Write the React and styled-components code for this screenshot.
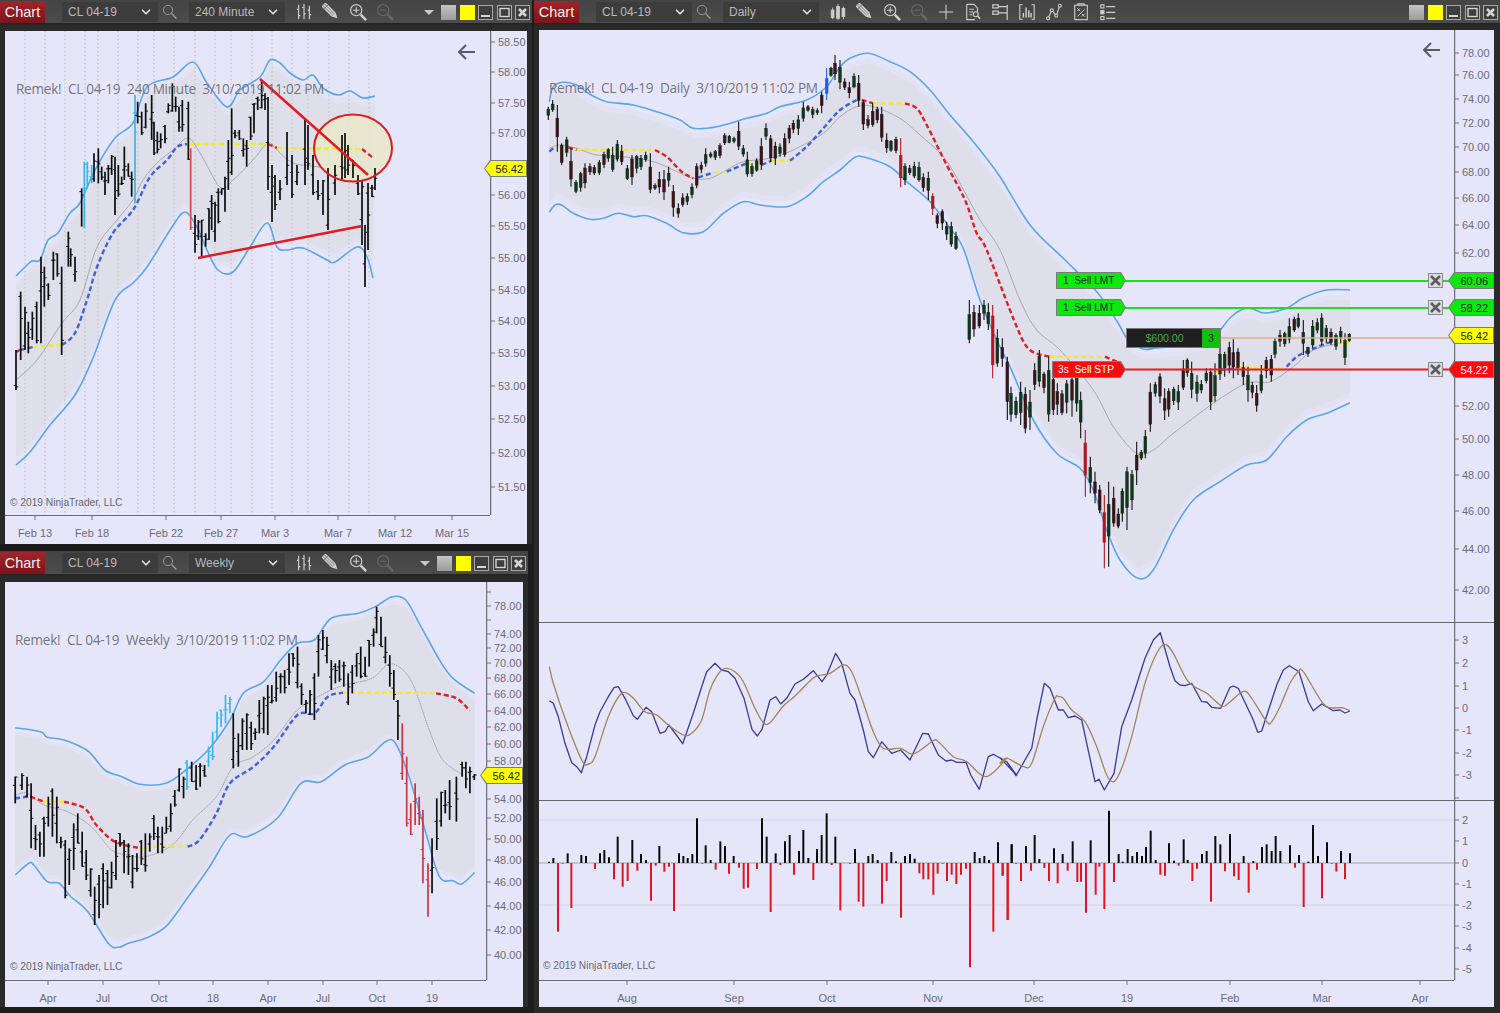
import React from "react";
import styled, { createGlobalStyle } from "styled-components";
import { ChevronDown } from "lucide-react";

const zoomed = (ox, oy, sx = 3) => (pts) => pts.map(([x, y]) => [ox + x / sx, oy + y / 3]);
const z7 = zoomed(540, 50);
const z8 = zoomed(960, 300);
const z9 = zoomed(540, 620);
const z10 = zoomed(1000, 620);
const z11 = zoomed(0, 550, 2.958);

const rng = (seed) => () => {
    seed = (seed * 9301 + 49297) % 233280;
    return seed / 233280;
};

const linePath = (pts) => "M" + pts.map((p) => p.map((n) => n.toFixed(1)).join(" ")).join("L");

const curvePath = (pts) => {
    let d = `M${pts[0][0].toFixed(1)} ${pts[0][1].toFixed(1)}`;
    for (let i = 0; i < pts.length - 1; i++) {
        const p0 = pts[i - 1] || pts[i];
        const p1 = pts[i];
        const p2 = pts[i + 1];
        const p3 = pts[i + 2] || p2;
        const c1 = [p1[0] + (p2[0] - p0[0]) / 6, p1[1] + (p2[1] - p0[1]) / 6];
        const c2 = [p2[0] - (p3[0] - p1[0]) / 6, p2[1] - (p3[1] - p1[1]) / 6];
        d += `C${c1[0].toFixed(1)} ${c1[1].toFixed(1)} ${c2[0].toFixed(1)} ${c2[1].toFixed(1)} ${p2[0].toFixed(1)} ${p2[1].toFixed(1)}`;
    }
    return d;
};

/* ---- 240 minute data ---- */
const m240Upper = [[16, 276], [25, 267], [32, 261], [40, 260], [48, 240], [58, 233], [70, 213], [80, 203], [95, 170], [115, 138], [133, 123], [147, 87], [173, 77], [193, 62], [207, 83], [227, 107], [240, 90], [260, 77], [270, 60], [280, 63], [290, 73], [303, 80], [313, 75], [323, 88], [338, 95], [350, 91], [363, 98], [375, 96]];
const m240Lower = [[16, 465], [30, 452], [50, 425], [75, 395], [93, 358], [115, 300], [133, 283], [147, 267], [172, 227], [185, 212], [197, 227], [207, 250], [218, 270], [233, 272], [250, 247], [267, 223], [277, 247], [287, 250], [303, 248], [327, 260], [335, 262], [357, 247], [367, 257], [373, 278]];
const m240Mid = [[16, 380], [37, 360], [62, 323], [80, 300], [97, 247], [117, 220], [133, 200], [143, 180], [157, 163], [173, 150], [188, 138], [200, 153], [220, 187], [233, 180], [253, 160], [268, 143], [277, 150], [293, 163], [320, 167]];
const m240Trend = [
    { c: "#e01f26", p: [[16, 352], [20, 350]] },
    { c: "#3f63d8", p: [[20, 350], [33, 347]] },
    { c: "#f2ec20", p: [[33, 347], [62, 345]] },
    { c: "#3f63d8", p: [[62, 345], [75, 333], [87, 300], [97, 267], [113, 233], [133, 210], [150, 177], [167, 160], [177, 147], [187, 144]] },
    { c: "#f2ec20", p: [[188, 144], [268, 144]] },
    { c: "#e01f26", p: [[268, 144], [277, 148]] },
    { c: "#f2ec20", p: [[277, 148], [360, 149]] },
    { c: "#e01f26", p: [[362, 149], [372, 157]] },
];
const m240Bars = [
    ...[[48, 870, 990], [62, 695, 900], [75, 740, 870], [85, 785, 880], [97, 755, 840], [110, 725, 850], [123, 590, 850], [133, 620, 740], [145, 670, 720], [160, 575, 660], [172, 580, 650], [185, 620, 885], [205, 515, 620], [212, 565, 620], [225, 590, 665], [245, 385, 500], [253, 305, 505, "#38b6e8"], [262, 305, 385, "#38b6e8"], [275, 315, 370, "#38b6e8"], [282, 280, 365], [295, 265, 370], [305, 320, 360], [315, 335, 405], [325, 315, 370], [335, 285, 345], [345, 290, 465], [355, 315, 410], [365, 350, 375], [373, 260, 360], [385, 310, 350], [395, 335, 410], [405, 105, 430, "#38b6e8"], [413, 125, 190], [425, 155, 225], [437, 130, 205], [455, 105, 240], [462, 185, 285], [472, 215, 280], [482, 220, 265], [495, 195, 250], [505, 130, 160], [517, 70, 155], [527, 110, 155], [537, 140, 215], [547, 120, 215], [565, 125, 300], [572, 265, 510, "#e0444a"], [585, 465, 578], [595, 480, 540], [605, 480, 590], [617, 520, 560], [627, 445, 540], [635, 405, 510], [645, 425, 545], [655, 385, 490], [665, 385, 405], [675, 350, 455], [685, 240, 390], [695, 145, 345], [705, 210, 235], [718, 210, 240], [730, 235, 290], [740, 240, 320], [752, 170, 240], [762, 130, 220], [773, 110, 150], [785, 60, 145], [795, 100, 150]]
        .map(([x, h, l, c]) => [x / 3, 60 + h / 3, 60 + l / 3, c]),
    [268, 97, 190], [272, 165, 222], [275, 175, 210], [280, 180, 200], [287, 132, 185], [292, 155, 198], [297, 165, 185], [305, 120, 185], [308, 125, 170], [313, 155, 195], [318, 180, 200], [323, 180, 215], [328, 168, 230], [335, 165, 195], [342, 135, 180], [345, 133, 178], [348, 145, 175], [353, 160, 178], [358, 175, 195], [362, 180, 245], [365, 225, 287], [368, 183, 250], [372, 185, 197], [375, 168, 190],
];
const m240Dots = [25, 45, 65, 85, 98, 118, 138, 154, 174, 195, 215, 231, 252, 272, 292, 308, 329, 349, 369];

/* ---- weekly data ---- */
const wkUpper = z11([[45, 533], [120, 545], [140, 562], [190, 570], [260, 603], [310, 660], [360, 680], [415, 703], [490, 700], [550, 660], [620, 595], [680, 510], [720, 430], [780, 395], [830, 330], [880, 280], [930, 270], [980, 205], [1060, 190], [1110, 170], [1160, 140], [1200, 150], [1240, 220], [1300, 330], [1340, 385], [1404, 430]]);
const wkLower = z11([[45, 975], [85, 940], [100, 945], [140, 995], [175, 1000], [210, 1040], [260, 1085], [320, 1180], [350, 1192], [380, 1180], [430, 1165], [490, 1130], [550, 1050], [620, 950], [680, 855], [730, 860], [820, 805], [890, 700], [950, 695], [1020, 645], [1090, 620], [1140, 575], [1170, 580], [1210, 680], [1260, 850], [1300, 980], [1340, 992], [1365, 1002], [1404, 968]]);
const wkMid = z11([[45, 735], [80, 730], [130, 765], [200, 785], [270, 830], [330, 900], [380, 915], [430, 920], [510, 885], [570, 810], [640, 740], [690, 650], [750, 620], [810, 570], [880, 480], [960, 430], [1020, 405], [1100, 385], [1145, 345], [1180, 350], [1220, 400], [1270, 540], [1310, 630], [1370, 675]]);
const wkTrend = [
    { c: "#3f63d8", p: z11([[45, 745], [85, 740]]) },
    { c: "#e01f26", p: z11([[90, 740], [130, 755]]) },
    { c: "#f2ec20", p: z11([[130, 755], [190, 755]]) },
    { c: "#e01f26", p: z11([[190, 755], [250, 775], [285, 825], [340, 875], [415, 895]]) },
    { c: "#f2ec20", p: z11([[415, 895], [445, 895]]) },
    { c: "#f2ec20", p: z11([[455, 890], [555, 890]]) },
    { c: "#3f63d8", p: z11([[555, 890], [590, 870], [640, 790], [680, 700], [750, 650], [810, 590], [880, 495], [930, 490], [970, 440], [1015, 428]]) },
    { c: "#f2ec20", p: z11([[1015, 428], [1290, 428]]) },
    { c: "#e01f26", p: z11([[1290, 430], [1350, 445], [1390, 482]]) },
];
const CYAN = "#38b6e8";
const RED = "#d0343a";
const wkBars = [[45, 680, 760], [65, 670, 720], [80, 680, 740], [92, 700, 895], [105, 825, 900], [118, 845, 920], [130, 800, 920], [143, 740, 830], [155, 715, 860], [168, 740, 880], [180, 860, 895], [193, 870, 1045], [205, 895, 1005], [218, 820, 960], [230, 790, 880], [243, 845, 950], [255, 900, 990], [268, 955, 1040], [280, 1010, 1125], [293, 975, 1105], [305, 940, 1075], [318, 960, 1065], [330, 935, 1015], [343, 870, 990], [355, 850, 890], [367, 870, 970], [380, 880, 975], [392, 915, 1015], [405, 910, 965], [418, 870, 945], [430, 850, 965], [443, 850, 905], [455, 795, 870], [467, 830, 910], [480, 830, 910], [492, 800, 850], [505, 760, 845], [517, 720, 770], [530, 655, 725], [543, 680, 745], [553, 630, 720, CYAN], [567, 635, 695], [580, 645, 720], [592, 640, 710], [605, 645, 680], [617, 590, 650, CYAN], [629, 545, 630, CYAN], [642, 485, 570, CYAN], [654, 480, 530, CYAN], [667, 435, 520, CYAN], [680, 440, 490, CYAN], [690, 490, 655], [705, 550, 650], [717, 505, 600], [730, 490, 600], [743, 515, 600], [755, 535, 570], [767, 450, 550], [780, 440, 550], [792, 405, 555], [804, 405, 460], [817, 365, 455], [830, 370, 430], [842, 360, 430], [855, 310, 405], [867, 310, 350], [880, 290, 415], [892, 400, 465], [905, 450, 490], [917, 420, 495], [930, 370, 510], [942, 255, 380], [955, 240, 300], [967, 260, 340], [980, 330, 420], [992, 340, 400], [1004, 330, 395], [1017, 335, 410], [1030, 370, 465], [1042, 345, 430], [1055, 310, 380], [1067, 290, 385], [1080, 320, 380], [1092, 270, 350], [1105, 235, 290], [1114, 170, 250], [1127, 200, 290], [1140, 260, 340], [1153, 315, 410], [1165, 360, 450], [1177, 450, 570], [1190, 520, 690, RED], [1203, 620, 830, RED], [1215, 760, 855, RED], [1228, 700, 825, RED], [1240, 740, 825, RED], [1251, 780, 1000, RED], [1266, 940, 1100, RED], [1278, 865, 1030], [1292, 745, 900], [1305, 725, 830], [1317, 720, 790], [1330, 690, 810], [1350, 680, 815], [1367, 635, 680], [1378, 635, 715], [1390, 650, 730], [1403, 672, 690]]
    .map(([x, h, l, c]) => [x / 2.958, 550 + h / 3, 550 + l / 3, c]);

/* ---- daily data ---- */
const dayUpper = [
    ...z7([[28, 155], [40, 110], [70, 97], [110, 105], [150, 133], [200, 155], [280, 165], [350, 185], [420, 210], [460, 235], [530, 230], [620, 205], [680, 190], [720, 170], [800, 150], [860, 110], [900, 50], [930, 25], [985, 10], [1050, 35], [1110, 65], [1170, 120], [1230, 195], [1300, 275], [1380, 380]]),
    [1030, 225], [1065, 260], [1097, 292], [1118, 323], [1128, 340], [1143, 349], [1157, 348], [1185, 345], [1213, 337], [1230, 318], [1243, 309], [1253, 309], [1265, 313], [1287, 308], [1303, 298], [1327, 290], [1350, 290],
];
const dayLower = [
    ...z7([[28, 487], [45, 465], [65, 465], [100, 490], [150, 508], [190, 505], [235, 490], [280, 500], [320, 497], [380, 520], [430, 548], [490, 545], [550, 490], [610, 455], [660, 465], [740, 470], [800, 440], [850, 395], [900, 360], [945, 322], [975, 322], [1050, 350], [1100, 395], [1170, 455], [1230, 535], [1270, 595]]),
    ...z8([[60, 0], [110, 120], [150, 200], [220, 360], [290, 460], [360, 505], [400, 570], [440, 690], [480, 780], [535, 835], [580, 810], [640, 690], [700, 600], [780, 545], [860, 495], [920, 480], [980, 410], [1040, 360], [1100, 340], [1170, 308]]),
];
const dayMid = [
    ...z7([[28, 295], [60, 285], [110, 295], [170, 315], [250, 320], [340, 335], [400, 360], [460, 385], [510, 385], [560, 360], [610, 335], [690, 325], [760, 300], [850, 250], [900, 200], [950, 170], [1000, 170], [1080, 205], [1140, 255], [1210, 320], [1260, 400], [1320, 510], [1380, 600]]),
    ...z8([[180, 0], [230, 90], [300, 150], [400, 270], [460, 380], [530, 460], [580, 450], [640, 400], [760, 310], [860, 250], [930, 245], [1000, 200], [1060, 150], [1140, 130]]),
];
const dayTrend = [
    { c: "#3f63d8", p: z7([[28, 305], [45, 290]]) },
    { c: "#f2ec20", p: z7([[55, 290], [85, 292]]) },
    { c: "#e01f26", p: z7([[85, 292], [110, 300]]) },
    { c: "#f2ec20", p: z7([[110, 300], [345, 300]]) },
    { c: "#e01f26", p: z7([[345, 300], [380, 320], [425, 365], [460, 385]]) },
    { c: "#3f63d8", p: z7([[475, 382], [520, 368]]) },
    { c: "#f2ec20", p: z7([[525, 368], [555, 368]]) },
    { c: "#3f63d8", p: z7([[560, 365], [620, 340]]) },
    { c: "#f2ec20", p: z7([[620, 340], [665, 345]]) },
    { c: "#3f63d8", p: z7([[665, 345], [695, 332]]) },
    { c: "#f2ec20", p: z7([[695, 332], [750, 332]]) },
    { c: "#3f63d8", p: z7([[750, 332], [800, 290], [850, 235], [900, 180], [950, 150]]) },
    { c: "#e01f26", p: z7([[965, 150], [1000, 160]]) },
    { c: "#f2ec20", p: z7([[1000, 160], [1095, 160]]) },
    { c: "#e01f26", p: [...z7([[1095, 160], [1130, 175], [1160, 225], [1220, 345], [1275, 450], [1310, 550], [1340, 600]]), ...z8([[170, 80], [210, 150], [270, 170]])] },
    { c: "#f2ec20", p: z8([[270, 170], [435, 170]]) },
    { c: "#e01f26", p: z8([[435, 170], [470, 185]]) },
    { c: "#f2ec20", p: z8([[765, 218], [780, 212]]) },
    { c: "#3f63d8", p: z8([[780, 210], [830, 205]]) },
    { c: "#f2ec20", p: z8([[835, 202], [970, 205]]) },
    { c: "#3f63d8", p: z8([[980, 200], [1010, 170], [1040, 155], [1100, 130], [1130, 125]]) },
    { c: "#f2ec20", p: z8([[1135, 128], [1170, 130]]) },
];
const BLUE_C = "#1a5fe0";
const RED_C = "#b01a20";
const dayCandles = [
    ...[[25, 170, 210], [38, 150, 185], [52, 165, 305], [65, 280, 345], [80, 260, 320], [93, 295, 410], [108, 390, 430], [122, 365, 425], [135, 340, 415], [150, 340, 375], [163, 345, 375], [178, 330, 375], [192, 305, 355], [205, 295, 335], [218, 290, 365], [232, 270, 335], [245, 285, 345], [262, 345, 390], [276, 315, 405], [290, 315, 370], [303, 315, 360], [317, 305, 335], [331, 310, 430], [345, 400, 420], [358, 365, 430], [372, 360, 450], [386, 350, 410], [400, 405, 500], [415, 460, 503], [428, 430, 470], [442, 430, 465], [456, 400, 445], [470, 340, 415], [484, 335, 370], [497, 295, 350], [512, 305, 325], [526, 300, 330], [540, 280, 325], [554, 250, 285], [568, 255, 280], [582, 260, 280], [596, 215, 300], [610, 285, 320], [622, 305, 380], [636, 340, 380], [650, 325, 365], [664, 265, 360], [678, 220, 270], [692, 255, 335], [706, 275, 345], [720, 280, 320], [734, 250, 320], [748, 225, 280], [760, 210, 250], [775, 195, 255], [790, 155, 215], [804, 165, 185], [818, 170, 205], [832, 175, 195], [845, 125, 190], [860, 55, 150, BLUE_C], [873, 50, 80], [885, 15, 90], [900, 30, 118], [914, 85, 120], [928, 95, 145], [942, 70, 115], [956, 75, 170], [970, 150, 240], [984, 195, 235], [998, 160, 230], [1012, 170, 220], [1025, 170, 275], [1040, 250, 308], [1053, 270, 305], [1068, 260, 310], [1082, 265, 412, RED_C], [1095, 340, 405], [1109, 345, 375], [1123, 335, 385], [1137, 335, 395], [1150, 370, 425], [1165, 365, 450], [1178, 430, 495, RED_C], [1192, 490, 535], [1207, 478, 540], [1220, 515, 570], [1234, 515, 590], [1248, 545, 600]]
        .map(([x, h, l, c]) => [540 + x / 3, 50 + h / 3, 50 + l / 3, c]),
    ...[[28, 0, 130], [42, 15, 110], [58, 15, 85], [72, 0, 60], [85, 10, 90], [98, 15, 235, RED_C], [112, 88, 200], [127, 115, 200], [142, 170, 360], [153, 260, 365], [168, 290, 355], [182, 245, 375], [196, 262, 400], [210, 270, 390], [224, 190, 270], [238, 150, 260], [252, 215, 280], [266, 170, 365], [280, 190, 345], [292, 250, 345], [306, 270, 345], [320, 240, 340], [336, 200, 350], [350, 210, 335], [362, 275, 415], [376, 390, 590, RED_C], [391, 470, 580], [405, 515, 610], [419, 555, 640], [433, 585, 805, RED_C], [446, 545, 800], [461, 560, 680], [475, 625, 685], [487, 565, 665], [501, 500, 690], [516, 510, 630], [530, 425, 555], [544, 450, 480], [556, 390, 475], [571, 250, 395], [586, 245, 290], [600, 220, 310], [614, 265, 360], [626, 265, 350], [641, 260, 315], [655, 255, 330], [670, 180, 270], [682, 175, 230], [695, 185, 295], [711, 225, 305], [724, 240, 280], [739, 205, 250], [752, 205, 330], [765, 190, 305], [780, 130, 240], [794, 155, 230], [808, 125, 220], [820, 118, 235], [834, 145, 225], [850, 185, 255], [864, 200, 305], [877, 245, 295], [890, 255, 335], [904, 195, 280], [919, 170, 235], [934, 165, 245], [945, 115, 175], [960, 90, 140], [974, 95, 140], [988, 55, 130], [1003, 50, 95], [1015, 40, 85], [1030, 60, 165], [1044, 140, 170], [1058, 60, 145], [1072, 55, 100], [1085, 40, 135], [1099, 75, 130], [1113, 85, 135], [1128, 100, 150], [1142, 80, 130], [1155, 100, 195], [1168, 100, 125]]
        .map(([x, h, l, c]) => [960 + x / 3, 300 + h / 3, 300 + l / 3, c]),
];

const stochBlue = [
    ...z9([[28, 242], [40, 250], [55, 290], [75, 370], [95, 428], [110, 440], [124, 458], [140, 410], [165, 315], [180, 275], [205, 230], [222, 203], [235, 200], [255, 235], [280, 287], [292, 298], [318, 262], [335, 275], [360, 340], [375, 335], [387, 315], [428, 371], [460, 280], [485, 200], [500, 155], [525, 130], [545, 150], [565, 155], [585, 175], [612, 235], [636, 328], [652, 348], [666, 328], [690, 240], [707, 230], [722, 252], [740, 235], [765, 192], [790, 178], [820, 152], [846, 185], [860, 165], [887, 100], [905, 130], [930, 220], [945, 240], [970, 330], [985, 395], [1000, 413], [1025, 365], [1055, 400], [1082, 390], [1110, 420], [1148, 340], [1165, 342], [1195, 405], [1218, 423], [1235, 420], [1250, 427], [1278, 427], [1292, 465], [1318, 508], [1345, 410], [1360, 403], [1400, 425], [1430, 466]]),
    ...z10([[0, 413], [20, 425], [48, 467], [95, 385], [110, 300], [133, 190], [150, 205], [175, 270], [190, 270], [205, 293], [225, 288], [245, 300], [285, 485], [297, 478], [313, 510], [342, 460], [365, 320], [395, 240], [435, 115], [460, 60], [481, 38], [510, 140], [525, 182], [540, 195], [555, 197], [575, 190], [605, 245], [620, 246], [635, 262], [662, 265], [690, 202], [700, 198], [715, 205], [760, 300], [773, 337], [785, 333], [830, 195], [850, 150], [868, 137], [897, 155], [925, 245], [940, 272], [965, 252], [1000, 272], [1020, 270], [1035, 279], [1050, 273]]),
];
const stochBrown = [
    ...z9([[28, 140], [40, 190], [75, 295], [125, 420], [145, 432], [165, 410], [205, 290], [240, 225], [262, 220], [285, 240], [315, 275], [350, 285], [385, 315], [430, 345], [455, 340], [485, 300], [510, 210], [540, 155], [560, 145], [585, 155], [610, 185], [645, 265], [670, 308], [690, 308], [730, 258], [765, 228], [815, 178], [835, 167], [870, 160], [910, 135], [935, 155], [965, 235], [1000, 335], [1030, 385], [1082, 385], [1120, 402], [1180, 362], [1195, 365], [1240, 410], [1280, 425], [1338, 470], [1400, 415]]),
    ...z10([[0, 430], [22, 415], [70, 440], [95, 430], [130, 320], [165, 235], [175, 230], [190, 235], [215, 270], [255, 305], [290, 380], [320, 465], [342, 485], [365, 445], [395, 350], [435, 190], [470, 100], [495, 73], [520, 100], [565, 185], [620, 220], [665, 258], [685, 250], [730, 214], [755, 235], [800, 305], [815, 305], [840, 260], [870, 190], [895, 155], [910, 155], [965, 245], [990, 263], [1025, 263], [1050, 272]]),
];

const histUp = [
    ...z9([[27, 725], [40, 714], [83, 700], [124, 705], [138, 708], [180, 700], [193, 690], [207, 712], [233, 650], [277, 660], [303, 702], [318, 720], [358, 678], [417, 700], [430, 708], [443, 714], [457, 702], [471, 595], [497, 676], [512, 720], [541, 664], [555, 678], [581, 708], [666, 595], [680, 650], [707, 700], [735, 664], [749, 645], [777, 693], [790, 630], [805, 714], [831, 687], [845, 645], [860, 580], [886, 650], [945, 687], [985, 708], [998, 702], [1013, 720], [1054, 696], [1068, 724], [1095, 708], [1110, 702], [1124, 716], [1304, 696], [1319, 714], [1333, 708], [1347, 720], [1374, 667], [1415, 673]]),
    ...z10([[35, 673], [78, 678], [104, 645], [118, 717], [162, 685], [188, 702], [218, 664], [272, 661], [327, 572], [356, 702], [368, 725], [383, 687], [397, 708], [411, 696], [426, 708], [438, 681], [452, 632], [467, 720], [507, 670], [522, 722], [551, 658], [563, 720], [606, 702], [620, 693], [646, 648], [661, 673], [690, 642], [731, 708], [760, 723], [786, 681], [800, 673], [815, 693], [827, 648], [841, 693], [870, 676], [897, 705], [925, 725], [939, 615], [954, 708], [981, 667], [1023, 693], [1050, 700]]),
];
const histDown = [
    ...z9([[68, 731], [54, 935], [94, 864], [165, 747], [222, 778], [248, 800], [263, 783], [292, 752], [333, 842], [347, 737], [373, 755], [387, 740], [402, 873], [487, 731], [527, 749], [567, 761], [597, 743], [611, 806], [624, 803], [651, 747], [692, 876], [721, 735], [762, 764], [820, 780], [875, 735], [901, 871], [930, 731], [956, 845], [970, 860], [1026, 851], [1040, 783], [1083, 893], [1138, 760], [1150, 778], [1165, 778], [1180, 824], [1193, 761], [1208, 731], [1221, 783], [1235, 764], [1249, 792], [1263, 764], [1278, 746], [1290, 1042], [1360, 935], [1388, 767], [1403, 900]]),
    ...z10([[8, 767], [23, 900], [48, 731], [63, 783], [93, 752], [133, 744], [147, 783], [173, 790], [203, 752], [232, 786], [243, 785], [258, 878], [287, 824], [298, 740], [313, 867], [342, 786], [481, 764], [495, 767], [536, 737], [577, 783], [591, 746], [633, 845], [675, 754], [702, 769], [716, 780], [746, 818], [771, 749], [885, 743], [911, 861], [966, 835], [995, 731], [1009, 755], [1035, 777]]),
];

/* ---- axes ---- */
const m240Ticks = [["58.50", 42], ["58.00", 72], ["57.50", 103], ["57.00", 133], ["56.00", 195], ["55.50", 226], ["55.00", 258], ["54.50", 290], ["54.00", 321], ["53.50", 353], ["53.00", 386], ["52.50", 419], ["52.00", 453], ["51.50", 487]];
const m240Time = [["Feb 13", 35], ["Feb 18", 92], ["Feb 22", 166], ["Feb 27", 221], ["Mar 3", 275], ["Mar 7", 338], ["Mar 12", 395], ["Mar 15", 452]];
const wkTicks = [["", 592], ["78.00", 606], ["", 620], ["74.00", 634], ["72.00", 648], ["70.00", 663], ["68.00", 678], ["66.00", 694], ["64.00", 711], ["62.00", 727], ["60.00", 744], ["58.00", 761], ["54.00", 799], ["52.00", 818], ["50.00", 839], ["48.00", 860], ["46.00", 882], ["44.00", 906], ["42.00", 930], ["40.00", 955]];
const wkTime = [["Apr", 48], ["Jul", 103], ["Oct", 159], ["18", 213], ["Apr", 268], ["Jul", 323], ["Oct", 377], ["19", 432]];
const dayTicks = [["78.00", 53], ["76.00", 75], ["74.00", 99], ["72.00", 123], ["70.00", 147], ["68.00", 172], ["66.00", 198], ["64.00", 225], ["62.00", 253], ["52.00", 406], ["50.00", 439], ["48.00", 475], ["46.00", 511], ["44.00", 549], ["42.00", 590]];
const stochTicks = [["3", 640], ["2", 663], ["1", 686], ["0", 708], ["-1", 730], ["-2", 753], ["-3", 775], ["", 798]];
const histTicks = [["2", 820], ["1", 841], ["0", 863], ["-1", 884], ["-2", 905], ["-3", 926], ["-4", 948], ["-5", 969]];
const dayTime = [["Aug", 627], ["Sep", 734], ["Oct", 827], ["Nov", 933], ["Dec", 1034], ["19", 1127], ["Feb", 1230], ["Mar", 1322], ["Apr", 1420]];

const GlobalStyle = createGlobalStyle`
    html, body {
        margin: 0;
        padding: 0;
        background: #1d1d1d;
        overflow: hidden;
    }
`;

const Desktop = styled.div`
    display: flex;
    justify-content: space-between;
    width: 1500px;
    height: 1013px;
    background: #1d1d1d;
    font-family: "Liberation Sans", Arial, sans-serif;
`;

const LeftColumn = styled.div`
    display: flex;
    flex-direction: column;
    gap: 7px;
    width: 532px;
`;

const Window = styled.section`
    display: flex;
    flex-direction: column;
    flex: none;
    width: ${(p) => p.$w}px;
    background: #2a2a2a;
`;

const Toolbar = styled.header`
    display: flex;
    align-items: center;
    box-sizing: border-box;
    flex: none;
    height: 23px;
    padding-top: 1px;
    margin-bottom: ${(p) => p.$gap}px;
    background: linear-gradient(#444444, #4c4c4c);
    box-shadow: 0 1px 2px #222;
`;

const Badge = styled.div`
    display: flex;
    align-items: center;
    justify-content: center;
    flex: none;
    width: 45px;
    height: 22px;
    margin-right: 17px;
    color: #f4eeee;
    font-size: 14.5px;
    background: linear-gradient(#a1242a, #7d1418);
    border-radius: 1px;
`;

const Dropdown = styled.div`
    display: flex;
    align-items: center;
    justify-content: space-between;
    box-sizing: border-box;
    flex: none;
    width: 96px;
    height: 20px;
    padding: 0 5px 0 6px;
    color: #b9b9b9;
    font-size: 12px;
    background: #3c3c3c;
`;

const LensSlot = styled.div`
    display: flex;
    align-items: center;
    box-sizing: border-box;
    flex: none;
    width: 31px;
    height: 20px;
    padding-left: 4px;
    color: #9a9a9a;
`;

const ToolIcon = styled.div`
    display: flex;
    align-items: center;
    justify-content: center;
    flex: none;
    width: 27px;
    height: 20px;
    color: ${(p) => (p.$dim ? "#686868" : "#cfcfcf")};
`;

const ToolIcons = styled.div`
    display: flex;
    margin-left: 5px;
`;

const WinControls = styled.div`
    display: flex;
    align-items: center;
    gap: 3.5px;
    margin-left: auto;
    padding-right: 2px;
`;

const Caret = styled.div`
    width: 0;
    height: 0;
    margin-right: 4px;
    border-left: 5px solid transparent;
    border-right: 5px solid transparent;
    border-top: 5px solid #c8c8c8;
`;

const Swatch = styled.div`
    box-sizing: border-box;
    width: 15px;
    height: 15px;
    background: ${(p) => p.$bg};
`;

const WinButton = styled.div`
    display: flex;
    align-items: center;
    justify-content: center;
    box-sizing: border-box;
    width: 15px;
    height: 15px;
    color: #d6d6d6;
    background: #3e3e3e;
    border: 1px solid #a8a8a8;
`;

const Panel = styled.div`
    position: relative;
    display: flex;
    flex-direction: column;
    flex: none;
    width: ${(p) => p.$w}px;
    height: ${(p) => p.$h}px;
    margin-left: 5px;
    overflow: hidden;
    background: #e6e6fa;
`;

const PaneRow = styled.div`
    display: flex;
    flex: none;
    border-bottom: ${(p) => (p.$line ? "1px solid #66666f" : "none")};
`;

const ChartSvg = styled.svg`
    display: block;
    flex: none;
`;

const AxisText = styled.text`
    font-size: 11px;
    font-family: "Liberation Sans", Arial, sans-serif;
    fill: #6c6c76;
    dominant-baseline: central;
`;

const Caption = styled.div`
    position: absolute;
    left: ${(p) => p.$x}px;
    top: ${(p) => p.$y}px;
    color: rgba(104, 104, 112, 0.92);
    font-family: "Open Sans", "Liberation Sans", sans-serif;
    font-size: 13.6px;
    letter-spacing: -0.27px;
    line-height: 18px;
    white-space: pre;
`;

const Copyright = styled.div`
    position: absolute;
    left: ${(p) => p.$x}px;
    top: ${(p) => p.$y}px;
    color: #66666e;
    font-size: 10.2px;
    line-height: 12px;
    white-space: pre;
`;

const BackArrow = styled.svg`
    position: absolute;
    left: ${(p) => p.$x}px;
    top: ${(p) => p.$y}px;
    color: #5a5a66;
`;

const OrderTag = styled.div`
    position: absolute;
    left: ${(p) => p.$x}px;
    top: ${(p) => p.$y}px;
    display: flex;
    align-items: center;
    box-sizing: border-box;
    width: ${(p) => p.$w}px;
    height: 17px;
    padding-left: ${(p) => p.$pad}px;
    color: ${(p) => p.$fg};
    font-size: 10.2px;
    white-space: pre;
    background: #7b7b7b;
    clip-path: polygon(0 0, calc(100% - 5px) 0, 100% 50%, calc(100% - 5px) 100%, 0 100%);
    span {
        position: relative;
    }
    &::before {
        content: "";
        position: absolute;
        inset: 1px;
        background: ${(p) => p.$bg};
        clip-path: polygon(0 0, calc(100% - 5px) 0, 100% 50%, calc(100% - 5px) 100%, 0 100%);
    }
`;

const PriceTag = styled.div`
    position: absolute;
    left: ${(p) => p.$x}px;
    top: ${(p) => p.$y}px;
    display: flex;
    align-items: center;
    justify-content: flex-end;
    box-sizing: border-box;
    width: ${(p) => p.$w}px;
    height: 17px;
    padding-right: ${(p) => p.$pr}px;
    color: ${(p) => p.$fg};
    font-size: 11px;
    background: #7b7b7b;
    clip-path: polygon(6px 0, 100% 0, 100% 100%, 6px 100%, 0 50%);
    span {
        position: relative;
    }
    &::before {
        content: "";
        position: absolute;
        inset: 1px;
        background: ${(p) => p.$bg};
        clip-path: polygon(6px 0, 100% 0, 100% 100%, 6px 100%, 0 50%);
    }
`;

const CloseBox = styled.div`
    position: absolute;
    left: ${(p) => p.$x}px;
    top: ${(p) => p.$y}px;
    display: flex;
    align-items: center;
    justify-content: center;
    box-sizing: border-box;
    width: 15px;
    height: 15px;
    color: #5c5c5c;
    background: #dcdce6;
    border: 1px solid #8a8a8a;
`;

const PnlBox = styled.div`
    position: absolute;
    left: ${(p) => p.$x}px;
    top: ${(p) => p.$y}px;
    display: flex;
    box-sizing: border-box;
    width: 95px;
    height: 20px;
    font-size: 10.5px;
    border: 1px solid #777;
`;

const PnlValue = styled.div`
    display: flex;
    align-items: center;
    justify-content: center;
    flex: 1;
    color: #4fa74f;
    background: #1e1e1e;
`;

const PnlQty = styled.div`
    display: flex;
    align-items: center;
    justify-content: center;
    width: 18px;
    color: #0e2a0e;
    background: #10bf10;
`;

const iconPaths = {
    bars: (
        <g stroke="currentColor" strokeWidth="1.3" fill="none">
            <path d="M4 2v16M10 1v17M16 3v15" />
            <path d="M2 7h2M4 14h2M8 5h2M10 12h2M14 8h2M16 13h2" />
        </g>
    ),
    candles: (
        <g fill="currentColor" stroke="currentColor" strokeWidth="1">
            <path d="M4 5v13M10 1v18M16 4v14" fill="none" />
            <rect x="2.5" y="8" width="3" height="8" />
            <rect x="8.5" y="4" width="3" height="13" />
            <rect x="14.5" y="6" width="3" height="9" />
        </g>
    ),
    pencil: (
        <g transform="rotate(45 10 10)">
            <rect x="-2" y="6.8" width="16" height="6.4" fill="currentColor" />
            <path d="M-2 8.8h16M-2 11.2h16" stroke="#555" strokeWidth="0.7" />
            <path d="M2 6.8v6.4" stroke="#555" strokeWidth="0.8" />
            <path d="M14 6.8l6 3.2-6 3.2z" fill="currentColor" />
        </g>
    ),
    zoomIn: (
        <g stroke="currentColor" fill="none">
            <circle cx="8" cy="8" r="6.2" strokeWidth="1.3" />
            <path d="M4.5 8h7M8 4.5v7" strokeWidth="1.2" />
            <path d="M13 13l6 6" strokeWidth="2.8" />
        </g>
    ),
    zoomOut: (
        <g stroke="currentColor" fill="none">
            <circle cx="8" cy="8" r="6.2" strokeWidth="1.3" />
            <path d="M4.5 8h7" strokeWidth="1.2" />
            <path d="M13 13l6 6" strokeWidth="2.8" />
        </g>
    ),
    lens: (
        <g stroke="currentColor" fill="none">
            <circle cx="7.5" cy="7.5" r="5.8" strokeWidth="1.2" />
            <path d="M12 12l6 6" strokeWidth="1.8" />
        </g>
    ),
    plus: <path d="M10 2v16M2 10h16" stroke="currentColor" strokeWidth="1.2" fill="none" />,
    docFind: (
        <g stroke="currentColor" strokeWidth="1.2" fill="none">
            <path d="M3 1.5h8l4 4V10M3 1.5v17h9" />
            <path d="M6 7h5M6 10h4M6 13h3" />
            <circle cx="13" cy="12.5" r="2.7" />
            <path d="M15 14.5l3 3" strokeWidth="1.8" />
        </g>
    ),
    table: (
        <g stroke="currentColor" strokeWidth="1.3" fill="none">
            <rect x="2" y="2" width="6" height="3.5" />
            <rect x="2" y="9" width="6" height="3.5" />
            <path d="M8 4h10M8 11h10M18 2v17" />
        </g>
    ),
    frame: (
        <g stroke="currentColor" fill="none">
            <path d="M5 2H2v16h3M15 2h3v16h-3" strokeWidth="1.2" />
            <path d="M6 16v-5M9 16V5M12 16V8M14.5 16v-5" strokeWidth="1.6" />
        </g>
    ),
    nodes: (
        <g stroke="currentColor" strokeWidth="1.2" fill="none">
            <path d="M3.5 17L7.5 8l5 6 4-11" />
            <circle cx="3.5" cy="17" r="1.7" fill="#4a4a4a" />
            <circle cx="7.5" cy="8" r="1.7" fill="#4a4a4a" />
            <circle cx="12.5" cy="14" r="1.7" fill="#4a4a4a" />
            <circle cx="16.5" cy="3" r="1.7" fill="#4a4a4a" />
        </g>
    ),
    clipboard: (
        <g stroke="currentColor" strokeWidth="1.2" fill="none">
            <rect x="3" y="2.5" width="14" height="16" />
            <path d="M6.5 2.5V1h7v1.5" />
            <path d="M6 6l3 3M9 6l-3 3M11 12l3 3M14 12l-3 3M6 15l8-8" strokeWidth="1" />
        </g>
    ),
    list: (
        <g stroke="currentColor" fill="none">
            <rect x="2" y="2" width="3.5" height="3.5" strokeWidth="1.2" />
            <rect x="2" y="8.5" width="3.5" height="3.5" fill="currentColor" strokeWidth="1.2" />
            <rect x="2" y="15" width="3.5" height="3.5" strokeWidth="1.2" />
            <path d="M8 4h10M8 10.5h10M8 17h10" strokeWidth="1.3" />
        </g>
    ),
};

const Glyph = ({ name, size = 18 }) => (
    <svg width={size} height={size} viewBox="0 0 20 20" aria-hidden="true">{iconPaths[name]}</svg>
);

const WindowControls = ({ caret }) => (
    <WinControls>
        {caret && <Caret />}
        <Swatch $bg="linear-gradient(#c4c4c4, #9c9c9c)" />
        <Swatch $bg="#ffff00" />
        <WinButton>
            <svg width="13" height="13" viewBox="0 0 13 13"><path d="M2 10h9" stroke="currentColor" strokeWidth="2" /></svg>
        </WinButton>
        <WinButton>
            <svg width="13" height="13" viewBox="0 0 13 13"><rect x="2" y="2.5" width="9" height="8" fill="none" stroke="currentColor" strokeWidth="1.4" /></svg>
        </WinButton>
        <WinButton>
            <svg width="13" height="13" viewBox="0 0 13 13"><path d="M3 3l7 7M10 3l-7 7" stroke="currentColor" strokeWidth="2.6" /></svg>
        </WinButton>
    </WinControls>
);

const ChartToolbar = ({ period, icons, gap, caret }) => (
    <Toolbar $gap={gap}>
        <Badge>Chart</Badge>
        <Dropdown>CL 04-19<ChevronDown size={14} strokeWidth={3} color="#dedede" /></Dropdown>
        <LensSlot><Glyph name="lens" size={16} /></LensSlot>
        <Dropdown>{period}<ChevronDown size={14} strokeWidth={3} color="#dedede" /></Dropdown>
        <ToolIcons>
            {icons.map((name) => (
                <ToolIcon key={name} $dim={name === "zoomOut"}><Glyph name={name} /></ToolIcon>
            ))}
        </ToolIcons>
        <WindowControls caret={caret} />
    </Toolbar>
);

const Pane = ({ x, y, w, h, children }) => (
    <ChartSvg width={w} height={h} viewBox={`${x} ${y} ${w} ${h}`}>{children}</ChartSvg>
);

const PriceScale = ({ x, y, w, h, ticks, labelX }) => (
    <Pane x={x} y={y} w={w} h={h}>
        <line x1={x + 0.5} x2={x + 0.5} y1={y} y2={y + h} stroke="#72727a" strokeWidth="1.5" />
        {ticks.map(([label, ty]) => (
            <React.Fragment key={ty}>
                <line x1={x} x2={x + 5} y1={ty} y2={ty} stroke="#72727a" strokeWidth="1" />
                <AxisText x={labelX} y={ty}>{label}</AxisText>
            </React.Fragment>
        ))}
    </Pane>
);

const TimeScale = ({ x, y, w, h, ticks, lineTo }) => (
    <Pane x={x} y={y} w={w} h={h}>
        <line x1={x} x2={lineTo} y1={y + 0.5} y2={y + 0.5} stroke="#6a6a72" strokeWidth="1.2" />
        {ticks.map(([label, tx]) => (
            <React.Fragment key={tx}>
                <line x1={tx} x2={tx} y1={y} y2={y + 5} stroke="#72727a" strokeWidth="1" />
                <AxisText x={tx} y={y + 17.5} textAnchor="middle">{label}</AxisText>
            </React.Fragment>
        ))}
    </Pane>
);

const BandFill = ({ upper, lower, inset }) => {
    const poly = (d) => [
        ...upper.map(([x, y]) => `${x.toFixed(1)},${(y + d).toFixed(1)}`),
        ...[...lower].reverse().map(([x, y]) => `${x.toFixed(1)},${(y - d).toFixed(1)}`),
    ].join(" ");
    return (
        <g>
            <polygon points={poly(inset * 0.5)} fill="#e2e2f4" />
            <polygon points={poly(inset)} fill="#dfdfec" />
        </g>
    );
};

const BandLines = ({ upper, lower }) => (
    <g fill="none" stroke="#5ca5e8" strokeWidth="1.6">
        <path d={curvePath(upper)} />
        <path d={curvePath(lower)} />
    </g>
);

const Trend = ({ parts, width = 2.4 }) => parts.map((s, i) => (
    <path key={i} d={curvePath(s.p)} fill="none" stroke={s.c} strokeWidth={width} strokeDasharray="5 2.8" />
));

const OhlcBars = ({ bars, seed }) => {
    const r = rng(seed);
    return bars.map(([x, hi, lo, c], i) => {
        const color = c || "#0c0c0c";
        const a = hi + (lo - hi) * r();
        const b = hi + (lo - hi) * r();
        return (
            <g key={i} stroke={color}>
                <line x1={x} x2={x} y1={hi} y2={lo} strokeWidth="1.7" />
                <line x1={x - 2.3} x2={x} y1={a} y2={a} strokeWidth="1" />
                <line x1={x} x2={x + 2.3} y1={b} y2={b} strokeWidth="1" />
            </g>
        );
    });
};

const Candles = ({ bars, seed }) => {
    const r = rng(seed);
    return bars.map(([x, hi, lo, c], i) => {
        const span = lo - hi;
        const top = hi + span * (0.08 + 0.28 * r());
        const bot = lo - span * (0.08 + 0.28 * r());
        const body = c || (r() > 0.5 ? "#0d3a1b" : "#3a1519");
        return (
            <g key={i}>
                <line x1={x} x2={x} y1={hi} y2={lo} stroke={c || "#111"} strokeWidth="1.1" />
                <rect x={x - 1.4} y={top} width="2.8" height={Math.max(bot - top, 2)} fill={body} stroke={c ? c : "#111"} strokeWidth="0.4" />
            </g>
        );
    });
};

const Minute240 = () => (
    <Window $w={532}>
        <ChartToolbar period="240 Minute" icons={["bars", "pencil", "zoomIn", "zoomOut"]} gap={8} caret />
        <Panel $w={522} $h={513}>
            <PaneRow>
                <Pane x={5} y={31} w={485} h={484}>
                    <BandFill upper={m240Upper} lower={m240Lower} inset={9} />
                    {m240Dots.map((x) => (
                        <line key={x} x1={x} x2={x} y1={31} y2={515} stroke="#c8c8b4" strokeWidth="1.3" strokeDasharray="1.5 2.5" />
                    ))}
                    <BandLines upper={m240Upper} lower={m240Lower} />
                    <path d={curvePath(m240Mid)} fill="none" stroke="#a8a8ac" strokeWidth="1" />
                    <ellipse cx="353" cy="148" rx="39" ry="33.5" fill="#e8e8c8" fillOpacity="0.8" />
                    <Trend parts={m240Trend} />
                    <OhlcBars bars={m240Bars} seed={17} />
                    <ellipse cx="353" cy="148" rx="39" ry="33.5" fill="none" stroke="#dc1c22" strokeWidth="2" />
                    <path d="M260 79L368 175" stroke="#e2191f" strokeWidth="2.4" />
                    <path d="M198 258L362 226" stroke="#e2191f" strokeWidth="2.4" />
                </Pane>
                <PriceScale x={490} y={31} w={37} h={484} ticks={m240Ticks} labelX={498} />
            </PaneRow>
            <TimeScale x={5} y={515} w={522} h={29} ticks={m240Time} lineTo={490} />
            <Caption $x={11} $y={49}>{"Remek!  CL 04-19  240 Minute  3/10/2019 11:02 PM"}</Caption>
            <Copyright $x={5} $y={466}>© 2019 NinjaTrader, LLC</Copyright>
            <BackArrow $x={452} $y={12} width="19" height="18" viewBox="0 0 19 18">
                <path d="M18 9H2M9 2L2 9l7 7" fill="none" stroke="currentColor" strokeWidth="2" />
            </BackArrow>
            <PriceTag $x={479} $y={129} $w={43} $pr={4} $bg="#ffff00" $fg="#222"><span>56.42</span></PriceTag>
        </Panel>
    </Window>
);

const Weekly = () => (
    <Window $w={528}>
        <ChartToolbar period="Weekly" icons={["bars", "pencil", "zoomIn", "zoomOut"]} gap={8} caret />
        <Panel $w={518} $h={425}>
            <PaneRow>
                <Pane x={5} y={582} w={481} h={398}>
                    <BandFill upper={wkUpper} lower={wkLower} inset={7} />
                    <BandLines upper={wkUpper} lower={wkLower} />
                    <path d={curvePath(wkMid)} fill="none" stroke="#a0a0a4" strokeWidth="1" strokeDasharray="1.6 0.6" />
                    <Trend parts={wkTrend} />
                    <OhlcBars bars={wkBars} seed={53} />
                </Pane>
                <PriceScale x={486} y={582} w={37} h={398} ticks={wkTicks} labelX={494} />
            </PaneRow>
            <TimeScale x={5} y={980} w={518} h={27} ticks={wkTime} lineTo={486} />
            <Caption $x={10} $y={49}>{"Remek!  CL 04-19  Weekly  3/10/2019 11:02 PM"}</Caption>
            <Copyright $x={5} $y={379}>© 2019 NinjaTrader, LLC</Copyright>
            <PriceTag $x={475} $y={185} $w={43} $pr={3} $bg="#ffff00" $fg="#222"><span>56.42</span></PriceTag>
        </Panel>
    </Window>
);

const Daily = () => (
    <Window $w={966}>
        <ChartToolbar
            period="Daily"
            icons={["candles", "pencil", "zoomIn", "zoomOut", "plus", "docFind", "table", "frame", "nodes", "clipboard", "list"]}
            gap={7}
        />
        <Panel $w={955} $h={977}>
            <PaneRow $line>
                <Pane x={539} y={30} w={915} h={592}>
                    <BandFill upper={dayUpper} lower={dayLower} inset={10} />
                    <BandLines upper={dayUpper} lower={dayLower} />
                    <path d={curvePath(dayMid)} fill="none" stroke="#a8a8ac" strokeWidth="1" />
                    <Trend parts={dayTrend} />
                    <Candles bars={dayCandles} seed={29} />
                    <line x1={1220} x2={1454} y1={338} y2={338} stroke="#dcb183" strokeWidth="1.6" />
                    <line x1={1125} x2={1454} y1={281} y2={281} stroke="#22dc22" strokeWidth="1.8" />
                    <line x1={1125} x2={1454} y1={308} y2={308} stroke="#22dc22" strokeWidth="1.8" />
                    <line x1={1125} x2={1454} y1={369.5} y2={369.5} stroke="#ee1c1c" strokeWidth="1.8" />
                </Pane>
                <PriceScale x={1454} y={30} w={40} h={592} ticks={dayTicks} labelX={1462} />
            </PaneRow>
            <PaneRow $line>
                <Pane x={539} y={623} w={915} h={177}>
                    <path d={linePath(stochBlue)} fill="none" stroke="#3a3a98" strokeWidth="1.3" strokeLinejoin="round" />
                    <path d={curvePath(stochBrown)} fill="none" stroke="#a5825c" strokeWidth="1.3" />
                </Pane>
                <PriceScale x={1454} y={623} w={40} h={177} ticks={stochTicks} labelX={1462} />
            </PaneRow>
            <PaneRow>
                <Pane x={539} y={801} w={915} h={179}>
                    <line x1={539} x2={1454} y1={820} y2={820} stroke="#d4d4e0" strokeWidth="1" />
                    <line x1={539} x2={1454} y1={905} y2={905} stroke="#d4d4e0" strokeWidth="1" />
                    <line x1={539} x2={1454} y1={863} y2={863} stroke="#a4a4aa" strokeWidth="1" />
                    {histUp.map(([x, y], i) => (
                        <line key={i} x1={x} x2={x} y1={y} y2={863} stroke="#0a0a0a" strokeWidth="2" />
                    ))}
                    {histDown.map(([x, y], i) => (
                        <line key={i} x1={x} x2={x} y1={863} y2={y} stroke="#e2151d" strokeWidth="2" />
                    ))}
                </Pane>
                <PriceScale x={1454} y={801} w={40} h={179} ticks={histTicks} labelX={1462} />
            </PaneRow>
            <TimeScale x={539} y={980} w={955} h={27} ticks={dayTime} lineTo={1454} />
            <Caption $x={10} $y={49}>{"Remek!  CL 04-19  Daily  3/10/2019 11:02 PM"}</Caption>
            <Copyright $x={4} $y={930}>© 2019 NinjaTrader, LLC</Copyright>
            <BackArrow $x={883} $y={11} width="19" height="18" viewBox="0 0 19 18">
                <path d="M18 9H2M9 2L2 9l7 7" fill="none" stroke="currentColor" strokeWidth="2" />
            </BackArrow>
            <OrderTag $x={517} $y={242} $w={70} $pad={7} $bg="#0ee80e" $fg="#142814"><span>{"1  Sell LMT"}</span></OrderTag>
            <OrderTag $x={517} $y={269} $w={70} $pad={7} $bg="#0ee80e" $fg="#142814"><span>{"1  Sell LMT"}</span></OrderTag>
            <OrderTag $x={513} $y={331} $w={74} $pad={6} $bg="#fa0c0c" $fg="#fff"><span>{"3s  Sell STP"}</span></OrderTag>
            <PnlBox $x={587} $y={298}>
                <PnlValue>$600.00</PnlValue>
                <PnlQty>3</PnlQty>
            </PnlBox>
            {[243, 270, 332].map((y) => (
                <CloseBox key={y} $x={889} $y={y}>
                    <svg width="13" height="13" viewBox="0 0 13 13"><path d="M2 2l9 9M11 2l-9 9" stroke="currentColor" strokeWidth="2.6" /></svg>
                </CloseBox>
            ))}
            <PriceTag $x={909} $y={242} $w={46} $pr={6} $bg="#0ee80e" $fg="#142814"><span>60.06</span></PriceTag>
            <PriceTag $x={909} $y={269} $w={46} $pr={6} $bg="#0ee80e" $fg="#142814"><span>58.22</span></PriceTag>
            <PriceTag $x={909} $y={297} $w={46} $pr={6} $bg="#ffff00" $fg="#222"><span>56.42</span></PriceTag>
            <PriceTag $x={909} $y={331} $w={46} $pr={6} $bg="#fa0c0c" $fg="#fff"><span>54.22</span></PriceTag>
        </Panel>
    </Window>
);

export default function App() {
    return (
        <Desktop>
            <GlobalStyle />
            <LeftColumn>
                <Minute240 />
                <Weekly />
            </LeftColumn>
            <Daily />
        </Desktop>
    );
}
